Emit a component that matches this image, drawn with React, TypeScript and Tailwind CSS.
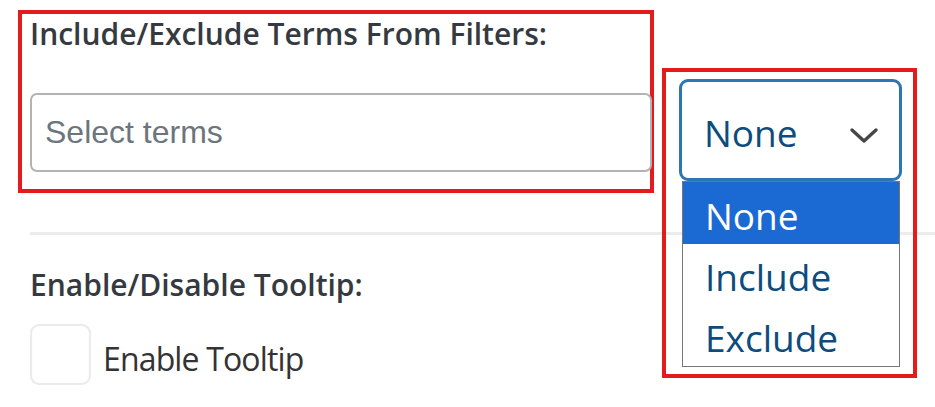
const options = ["None", "Include", "Exclude"];

function Chevron() {
  return (
    <svg width="30" height="18" viewBox="0 0 30 18" fill="none" className="mt-[6px]">
      <path d="M3 3 L15 14 L27 3" stroke="#474747" strokeWidth="3.4" strokeLinecap="round" strokeLinejoin="round" />
    </svg>
  );
}

export default function App() {
  return (
    <div className="relative w-[935px] h-[407px] overflow-hidden bg-white font-['Open_Sans',sans-serif]">
      <div className="pl-[18px] pt-[10px]">
        {/* annotated block: terms */}
        <div className="w-[636px] h-[183px] border-4 border-[#e31b1b] pl-2">
          <h3 className="text-[30px] leading-[40px] font-semibold text-[#343a40]">
            Include/Exclude Terms From Filters:
          </h3>
          <input
            type="text"
            placeholder="Select terms"
            className="mt-[39px] w-[622px] h-[79px] rounded-[7px] border-2 border-[#b3b3b3] px-[13px] font-['Liberation_Sans',Arial,sans-serif] text-[32px] text-[#555] placeholder:text-[#6c757d] outline-none"
          />
        </div>

        <div className="mt-[39px] ml-3 h-[3px] bg-[#ececec]" />

        <div className="pl-3 pt-[30px]">
          <h3 className="text-[30px] leading-[40px] font-semibold text-[#343a40]">
            Enable/Disable Tooltip:
          </h3>
          <label className="mt-[19px] flex items-center gap-3">
            <span className="w-[61px] h-[61px] rounded-[9px] border-2 border-[#ebebeb] bg-white shadow-[inset_0_0_1px_rgba(0,0,0,0.08)]" />
            <span className="pt-[8px] text-[32px] tracking-[-0.85px] text-[#333]">Enable Tooltip</span>
          </label>
        </div>
      </div>

      {/* annotated block: open select */}
      <div className="absolute left-[662px] top-[68px] w-[255px] h-[310px] border-4 border-[#e31b1b] pl-[13px] pt-[7px]">
        <div className="w-[223px] h-[102px] rounded-[9px] border-[3px] border-[#2c76b3] flex items-center justify-between pt-[6px] pl-[22px] pr-[20px]">
          <span className="text-[37px] text-[#0d4c7c]">None</span>
          <Chevron />
        </div>
        <ul className="ml-[3px] w-[218px] border border-[#767676] bg-white">
          {options.map((o, i) => (
            <li
              key={o}
              className={
                i === 0
                  ? "h-[62px] pt-[5px] pl-[22px] flex items-center text-[37px] bg-[#1b69d3] text-white"
                  : "h-[61px] pt-[5px] pl-[22px] flex items-center text-[37px] text-[#0d4c7c]"
              }
            >
              {o}
            </li>
          ))}
        </ul>
      </div>
    </div>
  );
}
